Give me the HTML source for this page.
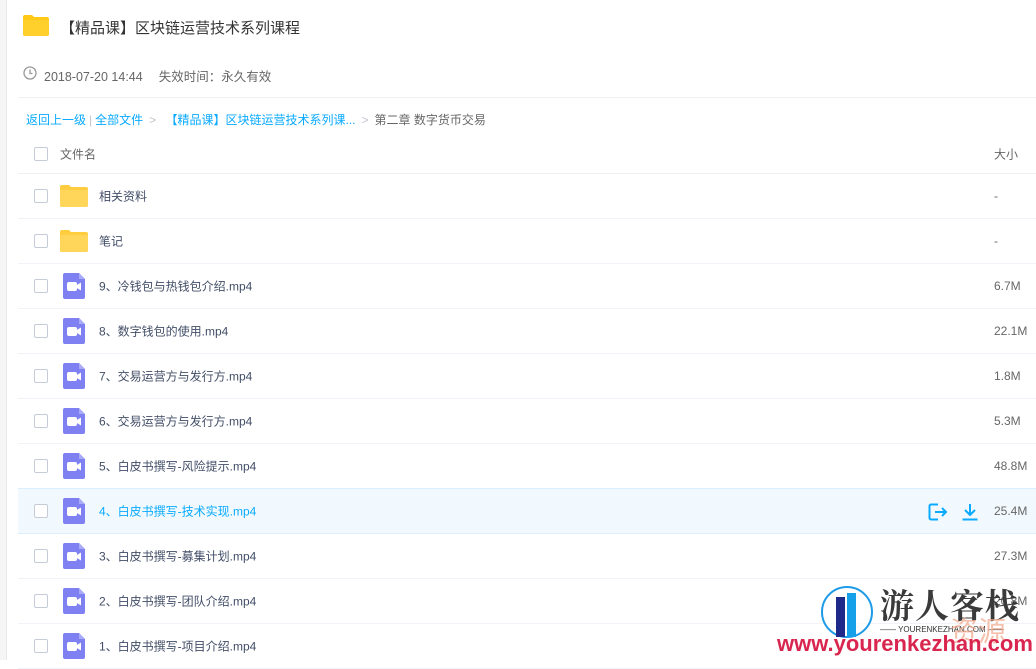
<!DOCTYPE html>
<html><head><meta charset="utf-8"><style>
*{margin:0;padding:0;box-sizing:border-box}
body{width:1036px;height:660px;overflow:hidden;background:#fff;font-family:"Liberation Sans","Noto Sans CJK SC",sans-serif;color:#424e67;position:relative}
.lb{position:absolute;left:0;top:0;width:7px;height:660px;background:#f5f5f6;border-right:1px solid #e8e8e8}
.title{position:absolute;left:60px;top:17px;font-size:15px;color:#333}
.meta{position:absolute;left:44px;top:66px;font-size:12.5px;color:#666}
.hr{position:absolute;left:18px;right:0;top:97px;border-top:1px solid #f0f0f0}
.bc{position:absolute;left:26px;top:111px;font-size:12px;color:#09aaff}
.bc .g{color:#c0c4cc;margin:0 6px}
.bc .c{color:#666}
.row{position:absolute;left:18px;right:0;height:45px;border-bottom:1px solid #f1f3f8;font-size:12px}
.row .cb{position:absolute;left:16px;top:50%;margin-top:-7px;width:14px;height:14px;border:1px solid #c5ccd8;border-radius:2px;background:#fff}
.row .nm{position:absolute;left:81px;top:50%;transform:translateY(-50%)}
.row .sz{position:absolute;left:976px;top:50%;transform:translateY(-50%);color:#666}
.row .ic{position:absolute;left:42px;top:50%;transform:translateY(-50%)}
.hl{background:#f2f9fe;border-top:1px solid #dbeefd;border-bottom:1px solid #dbeefd}
.hl .nm{color:#09aaff}
</style></head><body>
<div class="lb"></div>
<svg style="position:absolute;left:23px;top:15px" width="26" height="21" viewBox="0 0 26 21"><path d="M0 2a2 2 0 0 1 2-2h7l2 2h13a2 2 0 0 1 2 2v15a2 2 0 0 1-2 2H2a2 2 0 0 1-2-2z" fill="#ffc915"/><path d="M0 5h26v14a2 2 0 0 1-2 2H2a2 2 0 0 1-2-2z" fill="#ffd02c"/></svg>
<div class="title">【精品课】区块链运营技术系列课程</div>
<svg style="position:absolute;left:23px;top:66px" width="14" height="14" viewBox="0 0 14 14"><circle cx="7" cy="7" r="6" fill="none" stroke="#999" stroke-width="1.3"/><path d="M7 3.5V7.5H9.5" fill="none" stroke="#999" stroke-width="1.3"/></svg>
<div class="meta">2018-07-20 14:44<span style="margin-left:16px">失效时间：永久有效</span></div>
<div class="hr"></div>
<div class="bc">返回上一级<span style="color:#c0c4cc;margin:0 3px">|</span>全部文件<span class="g">&gt;</span> 【精品课】区块链运营技术系列课...<span class="g">&gt;</span><span class="c">第二章 数字货币交易</span></div>
<div class="row" style="top:130px;height:44px;border-bottom-color:#f0f0f0"><div class="cb" style="margin-top:-5px"></div><div class="nm" style="left:42px;color:#666;margin-top:2px">文件名</div><div class="sz" style="margin-top:2px">大小</div></div>

<div class="row" style="top:174px"><div class="cb"></div><svg class="ic" width="28" height="22" viewBox="0 0 28 22"><path d="M0 2a2 2 0 0 1 2-2h7l2 2h15a2 2 0 0 1 2 2v16a2 2 0 0 1-2 2H2a2 2 0 0 1-2-2z" fill="#ffcd3f"/><path d="M0 5h28v15a2 2 0 0 1-2 2H2a2 2 0 0 1-2-2z" fill="#ffd659"/></svg><div class="nm">相关资料</div><div class="sz">-</div></div>
<div class="row" style="top:219px"><div class="cb"></div><svg class="ic" width="28" height="22" viewBox="0 0 28 22"><path d="M0 2a2 2 0 0 1 2-2h7l2 2h15a2 2 0 0 1 2 2v16a2 2 0 0 1-2 2H2a2 2 0 0 1-2-2z" fill="#ffcd3f"/><path d="M0 5h28v15a2 2 0 0 1-2 2H2a2 2 0 0 1-2-2z" fill="#ffd659"/></svg><div class="nm">笔记</div><div class="sz">-</div></div>

<div class="row" style="top:264px"><div class="cb"></div><svg class="ic" style="left:45px" width="22" height="26" viewBox="0 0 22 26"><path d="M2 0h14l6 6v18a2 2 0 0 1-2 2H2a2 2 0 0 1-2-2V2a2 2 0 0 1 2-2z" fill="#7f81f3"/><path d="M16 0l6 6h-6z" fill="#a9abf8"/><rect x="4" y="9" width="10" height="9" rx="2" fill="#fff"/><path d="M13 12.5l5-3v8l-5-3z" fill="#fff"/></svg><div class="nm">9、冷钱包与热钱包介绍.mp4</div><div class="sz">6.7M</div></div>
<div class="row" style="top:309px"><div class="cb"></div><svg class="ic" style="left:45px" width="22" height="26" viewBox="0 0 22 26"><path d="M2 0h14l6 6v18a2 2 0 0 1-2 2H2a2 2 0 0 1-2-2V2a2 2 0 0 1 2-2z" fill="#7f81f3"/><path d="M16 0l6 6h-6z" fill="#a9abf8"/><rect x="4" y="9" width="10" height="9" rx="2" fill="#fff"/><path d="M13 12.5l5-3v8l-5-3z" fill="#fff"/></svg><div class="nm">8、数字钱包的使用.mp4</div><div class="sz">22.1M</div></div>
<div class="row" style="top:354px"><div class="cb"></div><svg class="ic" style="left:45px" width="22" height="26" viewBox="0 0 22 26"><path d="M2 0h14l6 6v18a2 2 0 0 1-2 2H2a2 2 0 0 1-2-2V2a2 2 0 0 1 2-2z" fill="#7f81f3"/><path d="M16 0l6 6h-6z" fill="#a9abf8"/><rect x="4" y="9" width="10" height="9" rx="2" fill="#fff"/><path d="M13 12.5l5-3v8l-5-3z" fill="#fff"/></svg><div class="nm">7、交易运营方与发行方.mp4</div><div class="sz">1.8M</div></div>
<div class="row" style="top:399px"><div class="cb"></div><svg class="ic" style="left:45px" width="22" height="26" viewBox="0 0 22 26"><path d="M2 0h14l6 6v18a2 2 0 0 1-2 2H2a2 2 0 0 1-2-2V2a2 2 0 0 1 2-2z" fill="#7f81f3"/><path d="M16 0l6 6h-6z" fill="#a9abf8"/><rect x="4" y="9" width="10" height="9" rx="2" fill="#fff"/><path d="M13 12.5l5-3v8l-5-3z" fill="#fff"/></svg><div class="nm">6、交易运营方与发行方.mp4</div><div class="sz">5.3M</div></div>
<div class="row" style="top:444px"><div class="cb"></div><svg class="ic" style="left:45px" width="22" height="26" viewBox="0 0 22 26"><path d="M2 0h14l6 6v18a2 2 0 0 1-2 2H2a2 2 0 0 1-2-2V2a2 2 0 0 1 2-2z" fill="#7f81f3"/><path d="M16 0l6 6h-6z" fill="#a9abf8"/><rect x="4" y="9" width="10" height="9" rx="2" fill="#fff"/><path d="M13 12.5l5-3v8l-5-3z" fill="#fff"/></svg><div class="nm">5、白皮书撰写-风险提示.mp4</div><div class="sz">48.8M</div></div>
<div class="row hl" style="top:488px;height:46px"><div class="cb"></div><svg class="ic" style="left:45px" width="22" height="26" viewBox="0 0 22 26"><path d="M2 0h14l6 6v18a2 2 0 0 1-2 2H2a2 2 0 0 1-2-2V2a2 2 0 0 1 2-2z" fill="#7f81f3"/><path d="M16 0l6 6h-6z" fill="#a9abf8"/><rect x="4" y="9" width="10" height="9" rx="2" fill="#fff"/><path d="M13 12.5l5-3v8l-5-3z" fill="#fff"/></svg><div class="nm">4、白皮书撰写-技术实现.mp4</div>
<svg style="position:absolute;left:910px;top:14px" width="20" height="18" viewBox="0 0 20 18"><path d="M10 1.5H3a1.5 1.5 0 0 0-1.5 1.5v12A1.5 1.5 0 0 0 3 16.5h7" fill="none" stroke="#09aaff" stroke-width="2"/><path d="M7 9h11M14 5l4 4-4 4" fill="none" stroke="#09aaff" stroke-width="2"/></svg>
<svg style="position:absolute;left:943px;top:14px" width="18" height="18" viewBox="0 0 18 18"><path d="M9 1v11M4 7l5 5 5-5M1.5 16.5h15" fill="none" stroke="#09aaff" stroke-width="2"/></svg>
<div class="sz">25.4M</div></div>
<div class="row" style="top:534px"><div class="cb"></div><svg class="ic" style="left:45px" width="22" height="26" viewBox="0 0 22 26"><path d="M2 0h14l6 6v18a2 2 0 0 1-2 2H2a2 2 0 0 1-2-2V2a2 2 0 0 1 2-2z" fill="#7f81f3"/><path d="M16 0l6 6h-6z" fill="#a9abf8"/><rect x="4" y="9" width="10" height="9" rx="2" fill="#fff"/><path d="M13 12.5l5-3v8l-5-3z" fill="#fff"/></svg><div class="nm">3、白皮书撰写-募集计划.mp4</div><div class="sz">27.3M</div></div>
<div class="row" style="top:579px"><div class="cb"></div><svg class="ic" style="left:45px" width="22" height="26" viewBox="0 0 22 26"><path d="M2 0h14l6 6v18a2 2 0 0 1-2 2H2a2 2 0 0 1-2-2V2a2 2 0 0 1 2-2z" fill="#7f81f3"/><path d="M16 0l6 6h-6z" fill="#a9abf8"/><rect x="4" y="9" width="10" height="9" rx="2" fill="#fff"/><path d="M13 12.5l5-3v8l-5-3z" fill="#fff"/></svg><div class="nm">2、白皮书撰写-团队介绍.mp4</div><div class="sz">20.8M</div></div>
<div class="row" style="top:624px"><div class="cb"></div><svg class="ic" style="left:45px" width="22" height="26" viewBox="0 0 22 26"><path d="M2 0h14l6 6v18a2 2 0 0 1-2 2H2a2 2 0 0 1-2-2V2a2 2 0 0 1 2-2z" fill="#7f81f3"/><path d="M16 0l6 6h-6z" fill="#a9abf8"/><rect x="4" y="9" width="10" height="9" rx="2" fill="#fff"/><path d="M13 12.5l5-3v8l-5-3z" fill="#fff"/></svg><div class="nm">1、白皮书撰写-项目介绍.mp4</div><div class="sz"></div></div>

<svg style="position:absolute;left:820px;top:585px" width="54" height="54" viewBox="0 0 54 54"><circle cx="27" cy="27" r="25" fill="#fff" fill-opacity=".6" stroke="#1e9be8" stroke-width="2"/><rect x="16" y="12" width="9" height="40" fill="#1d2a8a"/><rect x="27" y="8" width="9" height="44" fill="#16a0ea"/></svg>
<div style="position:absolute;left:880px;top:584px;font-family:'Noto Serif CJK SC',serif;font-weight:bold;font-size:34px;color:#3a3a3a;line-height:40px;letter-spacing:1px">游人客栈</div>
<div style="position:absolute;left:880px;top:625px;font-size:8px;color:#333;white-space:nowrap">—— YOURENKEZHAN.COM ——</div>
<div style="position:absolute;left:950px;top:610px;font-size:28px;color:#f3a88a;opacity:.7">资源</div>
<div style="position:absolute;left:777px;top:631px;font-size:22px;font-weight:bold;color:#d9264f;line-height:26px;white-space:nowrap">www.yourenkezhan.com</div>
</body></html>
